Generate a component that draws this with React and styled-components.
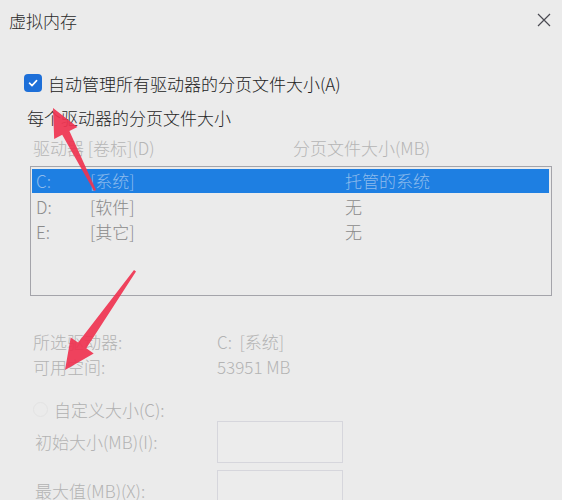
import React from 'react'
import styled, { createGlobalStyle } from "styled-components";

const Global = createGlobalStyle`
  html, body {
    margin: 0;
    padding: 0;
    background: #ebebeb;
  }
  body {
    font-family: "Noto Sans CJK SC", "Noto Sans", sans-serif;
  }
`;

const Window = styled.div`
  position: relative;
  width: 562px;
  height: 500px;
  overflow: hidden;
  background: #ebebeb;
  color: #222;
  font-size: 17px;
  font-weight: 300;
`;

const TitleBar = styled.div`
  height: 40px;
  display: flex;
  align-items: center;
  justify-content: space-between;
  padding: 0 11px 0 9px;
`;

const Title = styled.div`
  font-size: 17px;
  color: #2a2a2a;
`;

const Body = styled.div`
  display: flex;
  flex-direction: column;
`;

const CheckRow = styled.label`
  display: flex;
  align-items: center;
  gap: 6px;
  height: 24px;
  margin: 31px 0 0 24px;
`;

const CheckBox = styled.span`
  width: 18px;
  height: 18px;
  border-radius: 4px;
  background: #1d6fd8;
  display: flex;
  align-items: center;
  justify-content: center;
`;

const Line = styled.div`
  height: 24px;
  line-height: 24px;
  padding-left: ${p => p.$left || 0}px;
  margin-top: ${p => p.$top || 0}px;
  color: ${p => (p.$muted ? "#b3b3b3" : "#262626")};
  white-space: nowrap;
`;

const Header = styled.div`
  display: grid;
  grid-template-columns: 260px 1fr;
  height: 24px;
  line-height: 24px;
  margin-top: 6px;
  padding-left: 33px;
  color: #b5b5b5;
`;

const ListBox = styled.div`
  margin: 6px 0 0 30px;
  width: 517px;
  height: 126px;
  border: 1px solid #a4a4aa;
  padding: 2px 2px 0 1px;
  box-sizing: content-box;
`;

const Row = styled.div`
  display: grid;
  grid-template-columns: 54px 255px 1fr;
  height: ${p => (p.$selected ? 24 : 25)}px;
  line-height: ${p => (p.$selected ? 24 : 25)}px;
  padding-left: 4px;
  background: ${p => (p.$selected ? "#1e7fe2" : "transparent")};
  color: ${p => (p.$selected ? "#8dbbec" : "#8a8a8a")};
  margin-bottom: ${p => (p.$selected ? 1 : 0)}px;
`;

const Info = styled.div`
  display: grid;
  grid-template-columns: 184px 1fr;
  grid-auto-rows: 25px;
  align-items: center;
  margin-top: 33px;
  padding-left: 33px;
  color: #b3b3b3;
`;

const RadioRow = styled.div`
  display: flex;
  align-items: center;
  gap: 6px;
  height: 24px;
  margin: 18px 0 0 33px;
  color: #b0b0b0;
`;

const Radio = styled.span`
  width: 13px;
  height: 13px;
  border-radius: 50%;
  border: 1px solid #e3e3e3;
  background: #ebebeb;
`;

const Field = styled.div`
  display: grid;
  grid-template-columns: 182px 126px;
  align-items: center;
  padding-left: 35px;
  margin-top: ${p => p.$top}px;
  color: #b3b3b3;
  line-height: 18px;
`;

const Input = styled.div`
  height: 40px;
  border: 1px solid #d6d6dc;
  background: #ececec;
`;

const Overlay = styled.svg`
  position: absolute;
  left: 0;
  top: 0;
  pointer-events: none;
`;

const rows = [
  { d: "C:", label: "[系统]", size: "托管的系统", selected: true },
  { d: "D:", label: "[软件]", size: "无" },
  { d: "E:", label: "[其它]", size: "无" },
];

export default function App() {
  return (
    <Window>
      <Global />
      <TitleBar>
        <Title>虚拟内存</Title>
        <svg width="14" height="14" viewBox="0 0 14 14">
          <path d="M1 1 L13 13 M13 1 L1 13" stroke="#4a4a52" strokeWidth="1.2" fill="none" />
        </svg>
      </TitleBar>
      <Body>
        <CheckRow>
          <CheckBox>
            <svg width="12" height="12" viewBox="0 0 12 12">
              <path d="M2.5 6.2 L5 8.6 L9.6 3.6" stroke="#fff" strokeWidth="1.6" fill="none" strokeLinecap="round" strokeLinejoin="round" />
            </svg>
          </CheckBox>
          <span>自动管理所有驱动器的分页文件大小(A)</span>
        </CheckRow>
        <Line $left={27} $top={11}>每个驱动器的分页文件大小</Line>
        <Header>
          <span>驱动器 [卷标](D)</span>
          <span>分页文件大小(MB)</span>
        </Header>
        <ListBox>
          {rows.map(r => (
            <Row key={r.d} $selected={r.selected}>
              <span>{r.d}</span>
              <span>{r.label}</span>
              <span>{r.size}</span>
            </Row>
          ))}
        </ListBox>
        <Info>
          <span>所选驱动器:</span>
          <span>C:&nbsp;&nbsp;[系统]</span>
          <span>可用空间:</span>
          <span>53951 MB</span>
        </Info>
        <RadioRow>
          <Radio />
          <span>自定义大小(C):</span>
        </RadioRow>
        <Field $top={0}>
          <span>初始大小(MB)(I):</span>
          <Input />
        </Field>
        <Field $top={7}>
          <span>最大值(MB)(X):</span>
          <Input />
        </Field>
      </Body>
      <Overlay width="562" height="500" viewBox="0 0 562 500">
        <polygon
          points="53,108 77.4,127 69.4,131 96,190 94,191 62.2,134.8 54.2,139"
          fill="#ef3350"
          opacity="0.92"
        />
        <polygon
          points="65,370 70.7,337.4 78.1,342.5 134,270 136,271.5 86.3,348.3 93.7,353.4"
          fill="#ef3350"
          opacity="0.92"
        />
      </Overlay>
    </Window>
  )
}
